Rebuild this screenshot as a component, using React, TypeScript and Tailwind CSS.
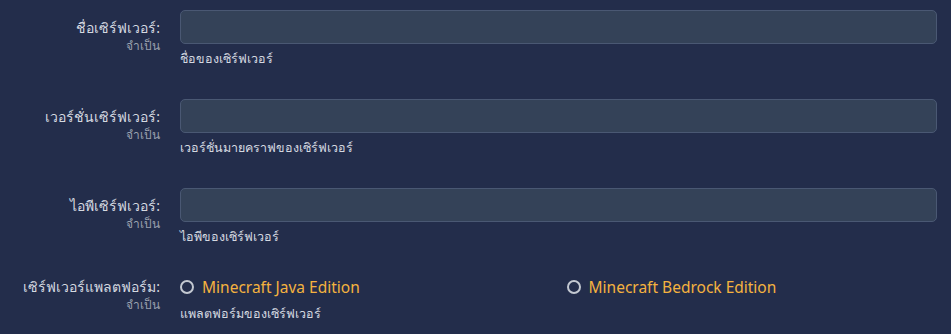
import React from "react";

type TextField = {
  label: string;
  hint: string;
};

const fields: TextField[] = [
  { label: "ชื่อเซิร์ฟเวอร์:", hint: "ชื่อของเซิร์ฟเวอร์" },
  { label: "เวอร์ชั่นเซิร์ฟเวอร์:", hint: "เวอร์ชั่นมายคราฟของเซิร์ฟเวอร์" },
  { label: "ไอพีเซิร์ฟเวอร์:", hint: "ไอพีของเซิร์ฟเวอร์" },
];

const platforms = ["Minecraft Java Edition", "Minecraft Bedrock Edition"];

function FieldLabel({ label }: { label: string }): React.ReactElement {
  return (
    <div className="w-[160px] shrink-0 text-right">
      <div className="text-[14px] leading-[20px] text-[#d5d9e0]">{label}</div>
      <div className="text-[12px] leading-[16px] text-[#9aa1ae]">จำเป็น</div>
    </div>
  );
}

export default function App(): React.ReactElement {
  return (
    <div
      className="w-[951px] h-[334px] bg-[#232d4b] pt-[10px] pr-[14px] overflow-hidden"
      style={{ fontFamily: "Tahoma, 'Noto Sans', 'DejaVu Sans', sans-serif" }}
    >
      {fields.map((f) => (
        <div key={f.label} className="flex gap-5 h-[89px]">
          <div className="pt-[8px]">
            <FieldLabel label={f.label} />
          </div>
          <div className="flex-1 min-w-0">
            <input
              type="text"
              className="block w-full h-[34px] rounded-[5px] border border-[#4a5873] bg-[#344258] px-3 text-sm text-white outline-none"
            />
            <p className="mt-[7px] text-[12.5px] leading-[16px] text-[#d5d9e0]">{f.hint}</p>
          </div>
        </div>
      ))}

      {/* Platform radio group */}
      <div className="flex gap-5">
        <div className="pt-0">
          <FieldLabel label="เซิร์ฟเวอร์แพลตฟอร์ม:" />
        </div>
        <div className="flex-1 min-w-0">
          <div className="grid grid-cols-2 gap-4">
            {platforms.map((p) => (
              <label key={p} className="flex items-center gap-[8px] cursor-pointer">
                <span className="w-[14px] h-[14px] rounded-full border-2 border-[#c3c8d1] shrink-0" />
                <span className="text-[15.5px] leading-[20px] text-[#f4b23f]">{p}</span>
              </label>
            ))}
          </div>
          <p className="mt-[9px] text-[12.5px] leading-[16px] text-[#d5d9e0]">แพลตฟอร์มของเซิร์ฟเวอร์</p>
        </div>
      </div>
    </div>
  );
}
